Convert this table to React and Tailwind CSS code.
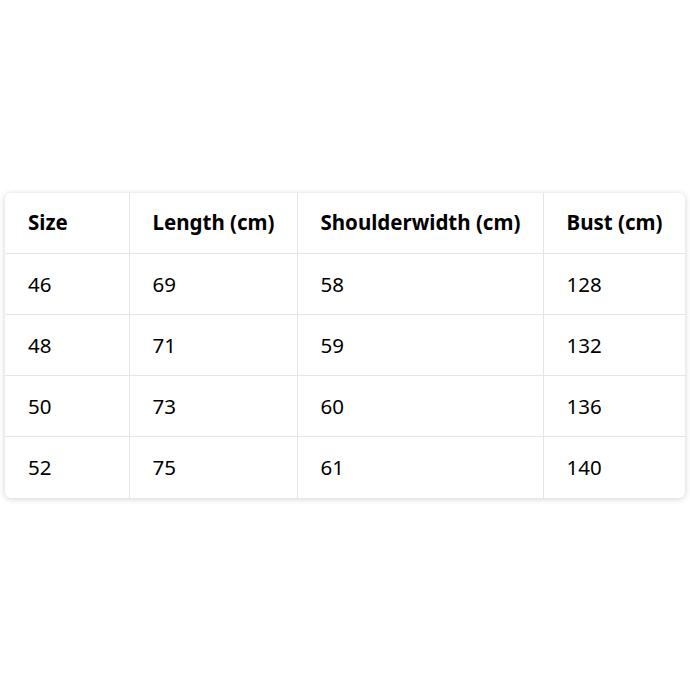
const rows = [
  ['46', '69', '58', '128'],
  ['48', '71', '59', '132'],
  ['50', '73', '60', '136'],
  ['52', '75', '61', '140'],
]

const heads = ['Size', 'Length (cm)', 'Shoulderwidth (cm)', 'Bust (cm)']
const widths = ['w-[124px]', 'w-[168px]', 'w-[246px]', 'w-[142px]']

export default function App() {
  return (
    <div className="w-[690px] h-[690px] bg-white flex items-center justify-center px-[5px]" style={{ fontFamily: '"Noto Sans", "Open Sans", sans-serif' }}>
      <div className="w-[680px] rounded-md bg-white overflow-hidden shadow-[0_1px_6px_rgba(0,0,0,0.18)]">
        <table className="w-full border-collapse table-fixed text-[20.5px] text-black">
          <thead>
            <tr className="h-[61px] border-b border-[#e6e6e6]">
              {heads.map((h, i) => (
                <th key={h} className={`${widths[i]} text-left font-bold pl-[23px] ${i > 0 ? 'border-l border-[#e6e6e6]' : ''}`}>{h}</th>
              ))}
            </tr>
          </thead>
          <tbody>
            {rows.map((r, ri) => (
              <tr key={ri} className={`h-[61px] ${ri < rows.length - 1 ? 'border-b border-[#e6e6e6]' : ''}`}>
                {r.map((c, i) => (
                  <td key={i} className={`pl-[23px] ${i > 0 ? 'border-l border-[#e6e6e6]' : ''}`}>{c}</td>
                ))}
              </tr>
            ))}
          </tbody>
        </table>
      </div>
    </div>
  )
}
